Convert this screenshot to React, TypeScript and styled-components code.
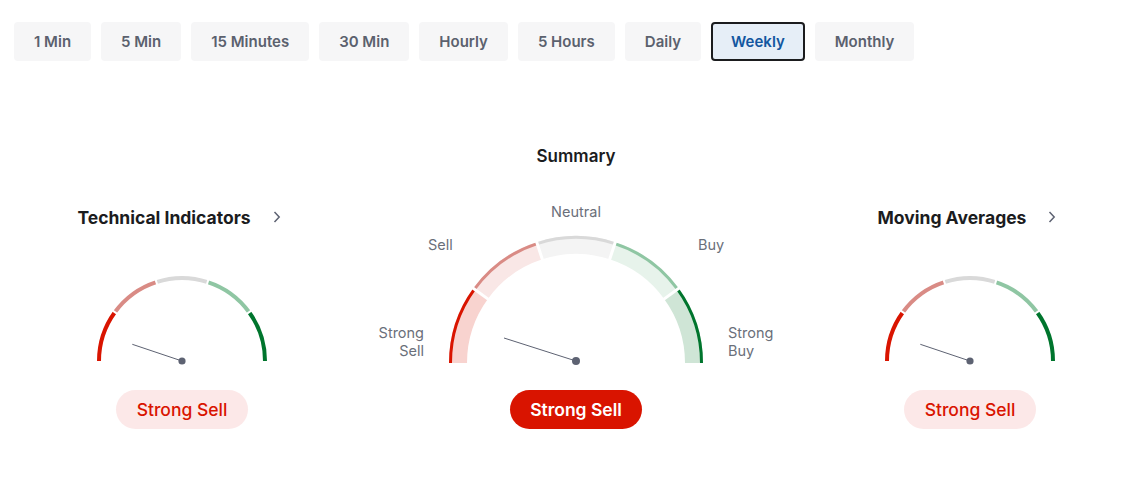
import React, { useState } from 'react';
import styled, { createGlobalStyle } from 'styled-components';

const PERIODS = ['1 Min', '5 Min', '15 Minutes', '30 Min', 'Hourly', '5 Hours', 'Daily', 'Weekly', 'Monthly'];

// stroke + light fill for each of the 5 zones, left to right
const ZONES = [
  { stroke: '#d91400', fill: '#f8d3cf' },
  { stroke: '#d98b85', fill: '#f9e7e6' },
  { stroke: '#d9d9d9', fill: '#f4f4f4' },
  { stroke: '#8fc6a3', fill: '#e7f3eb' },
  { stroke: '#00752d', fill: '#cfe5d6' },
];

const rad = (deg: number) => (deg * Math.PI) / 180;
const pt = (cx: number, cy: number, r: number, deg: number) =>
  [cx + r * Math.cos(rad(deg)), cy - r * Math.sin(rad(deg))] as const;

const arcPath = (cx: number, cy: number, r: number, a0: number, a1: number) => {
  const [x0, y0] = pt(cx, cy, r, a0);
  const [x1, y1] = pt(cx, cy, r, a1);
  return `M${x0} ${y0} A${r} ${r} 0 0 1 ${x1} ${y1}`;
};

const bandPath = (cx: number, cy: number, r0: number, r1: number, a0: number, a1: number) => {
  const [ax, ay] = pt(cx, cy, r1, a0);
  const [bx, by] = pt(cx, cy, r1, a1);
  const [cx2, cy2] = pt(cx, cy, r0, a1);
  const [dx, dy] = pt(cx, cy, r0, a0);
  return `M${ax} ${ay} A${r1} ${r1} 0 0 1 ${bx} ${by} L${cx2} ${cy2} A${r0} ${r0} 0 0 0 ${dx} ${dy} Z`;
};

const SmallGauge: React.FC = () => {
  const cx = 90, cy = 88, r = 83;
  return (
    <svg width="180" height="95" viewBox="0 0 180 95">
      {ZONES.map((z, i) => (
        <path key={i} d={arcPath(cx, cy, r, 180 - 36 * i, 180 - 36 * (i + 1))} stroke={z.stroke} strokeWidth="4" fill="none" />
      ))}
      {[1, 2, 3, 4].map((i) => {
        const [x0, y0] = pt(cx, cy, r - 4, 180 - 36 * i);
        const [x1, y1] = pt(cx, cy, r + 4, 180 - 36 * i);
        return <line key={i} x1={x0} y1={y0} x2={x1} y2={y1} stroke="#fff" strokeWidth="2" />;
      })}
      <line x1="40.3" y1="71.3" x2={cx} y2={cy} stroke="#5d6272" strokeWidth="1" />
      <circle cx={cx} cy={cy} r="3.6" fill="#5d6272" />
    </svg>
  );
};

const BigGauge: React.FC = () => {
  const cx = 210, cy = 163;
  return (
    <svg width="420" height="168" viewBox="0 0 420 168">
      {ZONES.map((z, i) => (
        <g key={i}>
          <path d={bandPath(cx, cy, 109, 127, 180 - 36 * i, 180 - 36 * (i + 1))} fill={z.fill} />
          <path d={arcPath(cx, cy, 125.5, 180 - 36 * i, 180 - 36 * (i + 1))} stroke={z.stroke} strokeWidth="3" fill="none" />
        </g>
      ))}
      {[1, 2, 3, 4].map((i) => {
        const [x0, y0] = pt(cx, cy, 104, 180 - 36 * i);
        const [x1, y1] = pt(cx, cy, 131, 180 - 36 * i);
        return <line key={i} x1={x0} y1={y0} x2={x1} y2={y1} stroke="#fff" strokeWidth="3" />;
      })}
      <line x1="138" y1="138" x2={cx} y2="161" stroke="#5d6272" strokeWidth="1" />
      <circle cx={cx} cy="161" r="4" fill="#5d6272" />

      <GaugeLabel x="210" y="17" textAnchor="middle">Neutral</GaugeLabel>
      <GaugeLabel x="62" y="50">Sell</GaugeLabel>
      <GaugeLabel x="332" y="50">Buy</GaugeLabel>
      <GaugeLabel x="58" y="138" textAnchor="end">Strong</GaugeLabel>
      <GaugeLabel x="58" y="156" textAnchor="end">Sell</GaugeLabel>
      <GaugeLabel x="362" y="138">Strong</GaugeLabel>
      <GaugeLabel x="362" y="156">Buy</GaugeLabel>
    </svg>
  );
};

const Chevron = () => (
  <svg width="8" height="12" viewBox="0 0 8 12">
    <path d="M1.5 1 L6.2 6 L1.5 11" stroke="#5d6272" strokeWidth="1.5" fill="none" />
  </svg>
);

const App: React.FC = () => {
  const [period, setPeriod] = useState('Weekly');

  return (
    <Page>
      <GlobalStyle />
      <Tabs>
        {PERIODS.map((p) => (
          <Tab key={p} $active={p === period} onClick={() => setPeriod(p)}>
            {p}
          </Tab>
        ))}
      </Tabs>

      <Panels>
        <SideCol>
          <SideHeader>
            <SideTitle>Technical Indicators</SideTitle>
            <Chevron />
          </SideHeader>
          <SmallGauge />
          <Verdict>Strong Sell</Verdict>
        </SideCol>

        <MainCol>
          <MainTitle>Summary</MainTitle>
          <BigGauge />
          <Verdict $solid>Strong Sell</Verdict>
        </MainCol>

        <SideCol>
          <SideHeader>
            <SideTitle>Moving Averages</SideTitle>
            <Chevron />
          </SideHeader>
          <SmallGauge />
          <Verdict>Strong Sell</Verdict>
        </SideCol>
      </Panels>
    </Page>
  );
};

const GlobalStyle = createGlobalStyle`
  html, body { margin: 0; padding: 0; background: #fff; }
  body { font-family: Inter, "Noto Sans", "Liberation Sans", sans-serif; }
`;

const Page = styled.div`
  padding-top: 22px;
  min-height: 478px;
  box-sizing: border-box;
`;

const Tabs = styled.div`
  display: flex;
  gap: 10px;
  padding-left: 14px;
`;

const Tab = styled.button<{ $active?: boolean }>`
  height: 39px;
  padding: 0 18px;
  box-sizing: border-box;
  border-radius: 4px;
  border: ${(p) => (p.$active ? '2px solid #1b1c1e' : '2px solid transparent')};
  background: ${(p) => (p.$active ? '#e6eef7' : '#f6f6f7')};
  color: ${(p) => (p.$active ? '#1256a0' : '#5b616e')};
  font-family: inherit;
  font-size: 15px;
  font-weight: 600;
  cursor: pointer;
`;

const Panels = styled.div`
  display: grid;
  grid-template-columns: 300px 420px 300px;
  column-gap: 34px;
  align-items: end;
  padding-left: 32px;
  margin-top: 83px;
`;

const SideCol = styled.div`
  display: flex;
  flex-direction: column;
  align-items: center;
`;

const MainCol = styled(SideCol)``;

const SideHeader = styled.div`
  display: flex;
  align-items: center;
  gap: 22px;
  height: 24px;
  margin-bottom: 44px;
  margin-left: -6px;
`;

const SideTitle = styled.span`
  font-size: 17.5px;
  font-weight: 700;
  color: #1b1c1e;
`;

const MainTitle = styled.div`
  height: 24px;
  line-height: 24px;
  font-size: 17px;
  font-weight: 600;
  color: #1b1c1e;
  margin-bottom: 32px;
`;

const GaugeLabel = styled.text`
  font-family: Inter, "Noto Sans", sans-serif;
  font-size: 14.5px;
  fill: #6a6f7a;
`;

const Verdict = styled.div<{ $solid?: boolean }>`
  margin-top: 22px;
  width: 132px;
  height: 39px;
  border-radius: 20px;
  display: flex;
  align-items: center;
  justify-content: center;
  font-size: 17.5px;
  font-weight: ${(p) => (p.$solid ? 600 : 500)};
  background: ${(p) => (p.$solid ? '#d91400' : '#fce8e8')};
  color: ${(p) => (p.$solid ? '#fff' : '#d91400')};
`;

export default App;
